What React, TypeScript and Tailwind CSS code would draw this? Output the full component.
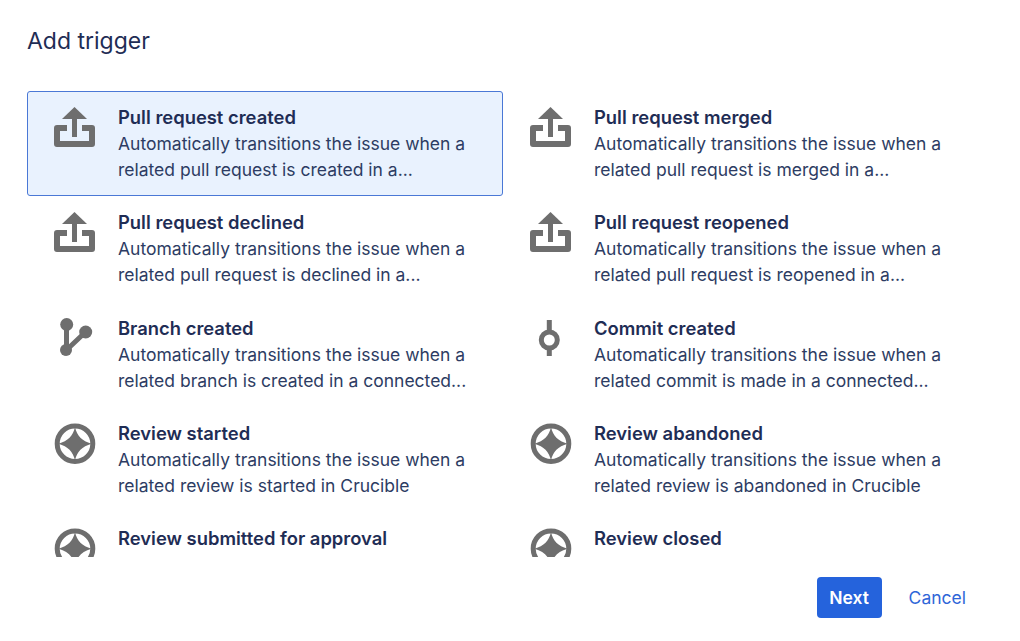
import type { ReactNode } from 'react';

type IconName = 'upload' | 'branch' | 'commit' | 'review';

interface Trigger {
    title: string;
    line1?: string;
    line2?: string;
    icon: IconName;
}

const triggers: Trigger[] = [
    { title: 'Pull request created', line1: 'Automatically transitions the issue when a', line2: 'related pull request is created in a...', icon: 'upload' },
    { title: 'Pull request merged', line1: 'Automatically transitions the issue when a', line2: 'related pull request is merged in a...', icon: 'upload' },
    { title: 'Pull request declined', line1: 'Automatically transitions the issue when a', line2: 'related pull request is declined in a...', icon: 'upload' },
    { title: 'Pull request reopened', line1: 'Automatically transitions the issue when a', line2: 'related pull request is reopened in a...', icon: 'upload' },
    { title: 'Branch created', line1: 'Automatically transitions the issue when a', line2: 'related branch is created in a connected...', icon: 'branch' },
    { title: 'Commit created', line1: 'Automatically transitions the issue when a', line2: 'related commit is made in a connected...', icon: 'commit' },
    { title: 'Review started', line1: 'Automatically transitions the issue when a', line2: 'related review is started in Crucible', icon: 'review' },
    { title: 'Review abandoned', line1: 'Automatically transitions the issue when a', line2: 'related review is abandoned in Crucible', icon: 'review' },
    // last row is cut off by the list edge, only the titles show
    { title: 'Review submitted for approval', icon: 'review' },
    { title: 'Review closed', icon: 'review' },
];

const icons: Record<IconName, ReactNode> = {
    upload: (
        <>
            <path d="M13 21H3V37H38V21H28" fill="none" stroke="#6e6e6e" strokeWidth="6" strokeLinejoin="round" />
            <path d="M18 10H23V30H18Z" fill="#6e6e6e" />
            <path d="M20.5 0L33 12H8Z" fill="#6e6e6e" />
        </>
    ),
    branch: (
        <>
            <path d="M12.5 7V32L31.5 14" fill="none" stroke="#6e6e6e" strokeWidth="5" />
            <circle cx="12.7" cy="6.5" r="6.5" fill="#6e6e6e" />
            <circle cx="31.7" cy="14" r="6.5" fill="#6e6e6e" />
            <circle cx="12" cy="32" r="6" fill="#6e6e6e" />
        </>
    ),
    commit: (
        <>
            <path d="M19.3 2V13M19.3 31V38" fill="none" stroke="#6e6e6e" strokeWidth="5" />
            <circle cx="19.3" cy="22" r="8" fill="none" stroke="#6e6e6e" strokeWidth="5" />
        </>
    ),
    review: (
        <>
            <circle cx="21" cy="20.7" r="17.8" fill="none" stroke="#6e6e6e" strokeWidth="5" />
            <path d="M21 4C23 13 28 18 37.5 20.7C28 23.4 23 28.5 21 37.5C19 28.5 14 23.4 4.5 20.7C14 18 19 13 21 4Z" fill="#6e6e6e" />
        </>
    ),
};

function TriggerCard({ trigger, selected }: { trigger: Trigger; selected: boolean }) {
    return (
        <button
            className={
                selected
                    ? 'flex h-[105.25px] items-start rounded-[3px] border border-[#4a78d6] bg-[#e9f2fe] pl-[26px] pt-[15px] text-left'
                    : 'flex h-[105.25px] items-start rounded-[3px] border border-transparent pl-[26px] pt-[15px] text-left'
            }
        >
            <svg width="42" height="42" viewBox="0 0 42 42" className="shrink-0">
                {icons[trigger.icon]}
            </svg>
            <div className="ml-[22px]">
                <div className="mt-[-3px] text-[18.4px] leading-[27px] font-semibold text-[#1f2d55]">{trigger.title}</div>
                {trigger.line1 && (
                    <div className="text-[17.5px] leading-[26px] text-[#2d3c63]">
                        {trigger.line1}
                        <br />
                        {trigger.line2}
                    </div>
                )}
            </div>
        </button>
    );
}

export default function App() {
    return (
        <div className="flex h-[641px] w-[1020px] flex-col overflow-hidden bg-white px-[27px] font-['Inter',sans-serif]">
            <h1 className="mt-[25px] h-[66px] text-[23px] leading-[32px] font-normal text-[#1f2d55]">Add trigger</h1>

            <div className="h-[466px] w-[952px] overflow-hidden">
                <div className="grid grid-cols-2">
                    {triggers.map((trigger, index) => (
                        <TriggerCard key={trigger.title} trigger={trigger} selected={index === 0} />
                    ))}
                </div>
            </div>

            {/* Footer */}
            <div className="mt-[20px] flex items-center justify-end gap-[27px] pr-[27px]">
                <button className="h-[41px] w-[65px] rounded-[4px] bg-[#2563dc] pt-[1px] text-[17.5px] font-semibold text-white">Next</button>
                <button className="pt-[1px] text-[17.5px] text-[#2f66d8]">Cancel</button>
            </div>
        </div>
    );
}
